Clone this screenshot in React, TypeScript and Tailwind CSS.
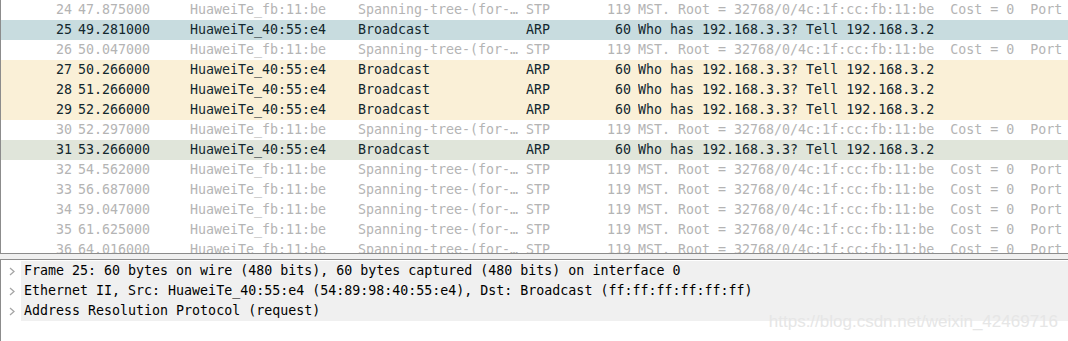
import React from 'react';

type Row = {
  no: number;
  time: string;
  src: string;
  dst: string;
  proto: string;
  len: number;
  info: string;
  kind: 'dim' | 'sel' | 'arp' | 'cur';
};

// wireshark keeps the double spaces in the info column
const stpInfo = 'MST. Root = 32768/0/4c:1f:cc:fb:11:be  Cost = 0  Port';
const arpInfo = 'Who has 192.168.3.3? Tell 192.168.3.2';

const rows: Row[] = [
  { no: 24, time: '47.875000', src: 'HuaweiTe_fb:11:be', dst: 'Spanning-tree-(for-…', proto: 'STP', len: 119, info: stpInfo, kind: 'dim' },
  { no: 25, time: '49.281000', src: 'HuaweiTe_40:55:e4', dst: 'Broadcast', proto: 'ARP', len: 60, info: arpInfo, kind: 'sel' },
  { no: 26, time: '50.047000', src: 'HuaweiTe_fb:11:be', dst: 'Spanning-tree-(for-…', proto: 'STP', len: 119, info: stpInfo, kind: 'dim' },
  { no: 27, time: '50.266000', src: 'HuaweiTe_40:55:e4', dst: 'Broadcast', proto: 'ARP', len: 60, info: arpInfo, kind: 'arp' },
  { no: 28, time: '51.266000', src: 'HuaweiTe_40:55:e4', dst: 'Broadcast', proto: 'ARP', len: 60, info: arpInfo, kind: 'arp' },
  { no: 29, time: '52.266000', src: 'HuaweiTe_40:55:e4', dst: 'Broadcast', proto: 'ARP', len: 60, info: arpInfo, kind: 'arp' },
  { no: 30, time: '52.297000', src: 'HuaweiTe_fb:11:be', dst: 'Spanning-tree-(for-…', proto: 'STP', len: 119, info: stpInfo, kind: 'dim' },
  { no: 31, time: '53.266000', src: 'HuaweiTe_40:55:e4', dst: 'Broadcast', proto: 'ARP', len: 60, info: arpInfo, kind: 'cur' },
  { no: 32, time: '54.562000', src: 'HuaweiTe_fb:11:be', dst: 'Spanning-tree-(for-…', proto: 'STP', len: 119, info: stpInfo, kind: 'dim' },
  { no: 33, time: '56.687000', src: 'HuaweiTe_fb:11:be', dst: 'Spanning-tree-(for-…', proto: 'STP', len: 119, info: stpInfo, kind: 'dim' },
  { no: 34, time: '59.047000', src: 'HuaweiTe_fb:11:be', dst: 'Spanning-tree-(for-…', proto: 'STP', len: 119, info: stpInfo, kind: 'dim' },
  { no: 35, time: '61.625000', src: 'HuaweiTe_fb:11:be', dst: 'Spanning-tree-(for-…', proto: 'STP', len: 119, info: stpInfo, kind: 'dim' },
  { no: 36, time: '64.016000', src: 'HuaweiTe_fb:11:be', dst: 'Spanning-tree-(for-…', proto: 'STP', len: 119, info: stpInfo, kind: 'dim' },
];

const rowStyle: Record<Row['kind'], string> = {
  dim: 'bg-white text-[#b4b4b4]',
  sel: 'bg-[#c8dcdf] text-[#12272e]',
  arp: 'bg-[#faf0d7] text-[#12272e]',
  cur: 'bg-[#e0e5da] text-[#12272e]',
};

const details = [
  'Frame 25: 60 bytes on wire (480 bits), 60 bytes captured (480 bits) on interface 0',
  'Ethernet II, Src: HuaweiTe_40:55:e4 (54:89:98:40:55:e4), Dst: Broadcast (ff:ff:ff:ff:ff:ff)',
  'Address Resolution Protocol (request)',
];

const Chevron = () => (
  <svg width="6" height="9" viewBox="0 0 6 9" className="shrink-0">
    <path d="M1 1l4 3.5L1 8" fill="none" stroke="#a6a6a6" strokeWidth="1.3" />
  </svg>
);

export default function App() {
  return (
    <div
      className="relative w-[1068px] h-[341px] overflow-hidden bg-white text-[13.3px] leading-[20px]"
      style={{ fontFamily: '"DejaVu Sans Mono", "Liberation Mono", monospace' }}
    >
      {/* packet list */}
      <div className="h-[254px] overflow-hidden border-l border-b border-[#8c8c8c]">
        {rows.map((r) => (
          <div
            key={r.no}
            className={`grid grid-cols-[77px_112px_168px_168px_64px_48px_1fr] h-[20px] whitespace-pre ${rowStyle[r.kind]}`}
          >
            <span className="text-right pr-[6px]">{r.no}</span>
            <span>{r.time}</span>
            <span>{r.src}</span>
            <span className="overflow-hidden">{r.dst}</span>
            <span>{r.proto}</span>
            <span className="text-right pr-[7px]">{r.len}</span>
            <span className="overflow-hidden">{r.info}</span>
          </div>
        ))}
      </div>

      {/* splitter */}
      <div className="h-[5px] bg-[#f0f0f0]" />

      {/* packet details */}
      <div className="h-[82px] border-l border-t border-[#8c8c8c] pt-[1px]">
        {details.map((d) => (
          <div key={d} className="flex h-[20px] items-center">
            <div className="w-[20px] flex justify-center pl-[1px]">
              <Chevron />
            </div>
            <div className="flex-1 h-full bg-[#f0f0f0] text-black whitespace-nowrap pl-[3px]">{d}</div>
          </div>
        ))}
      </div>

      {/* watermark */}
      <div
        className="absolute right-[10px] bottom-[9px] text-[17px] leading-[20px] text-[#e6e6e6]"
        style={{ fontFamily: '"Liberation Sans", Arial, sans-serif' }}
      >
        https://blog.csdn.net/weixin_42469716
      </div>
    </div>
  );
}
